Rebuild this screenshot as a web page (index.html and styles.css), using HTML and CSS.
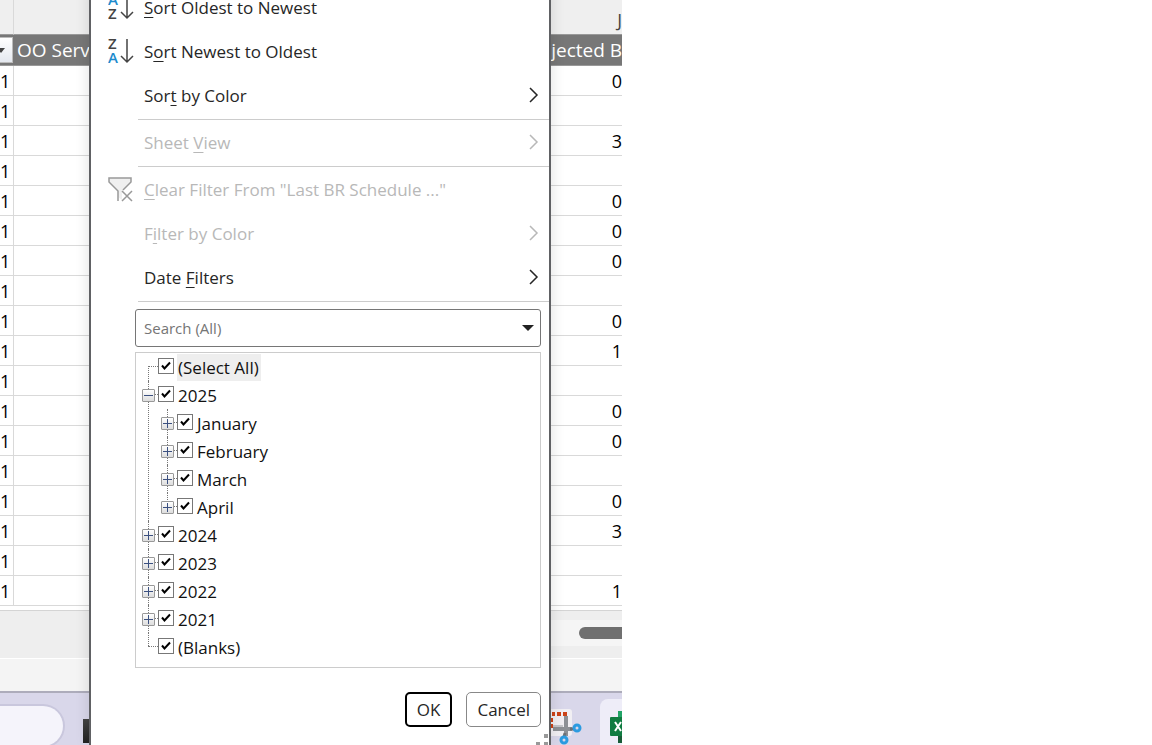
FILE: index.html
```
<!DOCTYPE html>
<html lang="en">
<head>
  <meta charset="UTF-8">
  <meta name="viewport" content="width=device-width, initial-scale=1.0">
  <title>Date filter</title>
  <link rel="stylesheet" href="styles.css">
</head>
<body>
  <div class="screen">
    <!-- worksheet behind the menu -->
    <table class="sheet">
      <colgroup><col class="col-count"><col><col class="col-projected"></colgroup>
      <thead>
        <tr class="letters"><td></td><td></td><th scope="col">J</th></tr>
        <tr class="names">
          <th><button class="filter-btn" aria-label="Filter"><svg width="12" height="25" viewBox="0 0 12 25"><path d="M-3 10h8L1 15z" fill="#444"/></svg></button></th>
          <th scope="col">OO Serv</th>
          <th scope="col">jected B</th>
        </tr>
      </thead>
      <tbody>
        <tr><td>1</td><td></td><td>0</td></tr>
        <tr><td>1</td><td></td><td></td></tr>
        <tr><td>1</td><td></td><td>3</td></tr>
        <tr><td>1</td><td></td><td></td></tr>
        <tr><td>1</td><td></td><td>0</td></tr>
        <tr><td>1</td><td></td><td>0</td></tr>
        <tr><td>1</td><td></td><td>0</td></tr>
        <tr><td>1</td><td></td><td></td></tr>
        <tr><td>1</td><td></td><td>0</td></tr>
        <tr><td>1</td><td></td><td>1</td></tr>
        <tr><td>1</td><td></td><td></td></tr>
        <tr><td>1</td><td></td><td>0</td></tr>
        <tr><td>1</td><td></td><td>0</td></tr>
        <tr><td>1</td><td></td><td></td></tr>
        <tr><td>1</td><td></td><td>0</td></tr>
        <tr><td>1</td><td></td><td>3</td></tr>
        <tr><td>1</td><td></td><td></td></tr>
        <tr><td>1</td><td></td><td>1</td></tr>
      </tbody>
    </table>
    <div class="tabs"><div class="scroll"><div class="thumb"></div></div></div>
    <div class="status"></div>
    <div class="taskbar">
      <div class="pill"></div>
      <div class="dark-app"></div>
      <svg class="snip" width="32" height="38" viewBox="0 0 32 38">
        <rect x="-4" y="1" width="26" height="27" rx="3" fill="#f1eff3"/>
        <path d="M2 4h3v4H2zM7 4h4v4H7zM13 4h4v4h-4zM1 10h2v4H1zM1 16h2v4H1z" fill="#cc4318"/>
        <path d="M3 19h10M16 8v5" stroke="#c4c5c9" stroke-width="4" fill="none"/>
        <path d="M3 21h19M16 8v20" stroke="#8d9095" stroke-width="4" fill="none"/>
        <path d="M20 21h5M15 25l-1 4" stroke="#6d7075" stroke-width="3"/>
        <circle cx="27" cy="20" r="3" fill="#d9d7ea" stroke="#2c9be0" stroke-width="3"/>
        <circle cx="14" cy="32" r="3" fill="#d9d7ea" stroke="#2c9be0" stroke-width="3"/>
      </svg>
      <div class="active-app">
        <svg width="12" height="32" viewBox="0 0 12 32">
          <path d="M8 0h4v32H8z" fill="#21a366"/>
          <path d="M8 16h4v16H8z" fill="#185c37"/>
          <rect y="6" width="20" height="19" rx="1" fill="#107c41"/>
          <path d="M5 11l6 9M11 11l-6 9" stroke="#fff" stroke-width="2"/>
        </svg>
      </div>
    </div>

    <!-- filter menu -->
    <div class="menu">
      <button class="item">
        <svg class="icon" width="26" height="28" viewBox="0 0 26 28">
          <text class="letter blue" x="0" y="12">A</text>
          <text class="letter" x="0" y="26">Z</text>
          <path d="M19 2v23M13 19l6 6 6-6" fill="none" stroke="#444" stroke-width="1.5"/>
        </svg>
        <span><u>S</u>ort Oldest to Newest</span>
      </button>
      <button class="item">
        <svg class="icon" width="26" height="28" viewBox="0 0 26 28">
          <text class="letter" x="0" y="12">Z</text>
          <text class="letter blue" x="0" y="26">A</text>
          <path d="M19 2v23M13 19l6 6 6-6" fill="none" stroke="#444" stroke-width="1.5"/>
        </svg>
        <span>S<u>o</u>rt Newest to Oldest</span>
      </button>
      <button class="item">
        <span>Sor<u>t</u> by Color</span>
        <svg class="arrow" width="10" height="16" viewBox="0 0 10 16"><path d="M1 1l7 7-7 7"/></svg>
      </button>
      <hr>
      <button class="item" disabled>
        <span>Sheet <u>V</u>iew</span>
        <svg class="arrow" width="10" height="16" viewBox="0 0 10 16"><path d="M1 1l7 7-7 7"/></svg>
      </button>
      <hr>
      <button class="item" disabled>
        <svg class="icon" width="26" height="28" viewBox="0 0 26 28">
          <path d="M1 3h22v4l-9 9v9l-4-3v-6L1 7z" fill="#f0f0f0"/>
          <path d="M10 26V16L1 7V3h22v4l-8 8" fill="none" stroke="#999" stroke-width="1.5"/>
          <path d="M14 16l10 10M24 16L14 26" stroke="#999" stroke-width="1.5"/>
        </svg>
        <span><u>C</u>lear Filter From "Last BR Schedule ..."</span>
      </button>
      <button class="item" disabled>
        <span>F<u>i</u>lter by Color</span>
        <svg class="arrow" width="10" height="16" viewBox="0 0 10 16"><path d="M1 1l7 7-7 7"/></svg>
      </button>
      <button class="item">
        <span>Date <u>F</u>ilters</span>
        <svg class="arrow" width="10" height="16" viewBox="0 0 10 16"><path d="M1 1l7 7-7 7"/></svg>
      </button>
      <hr>

      <div class="search">
        <input type="text" placeholder="Search (All)" aria-label="Search">
        <button aria-label="Search options"><svg width="12" height="6" viewBox="0 0 12 6"><path d="M0 0h12L6 6z" fill="#222"/></svg></button>
      </div>

      <ul class="tree">
        <li><div class="row"><input type="checkbox" id="all" checked><label class="selected" for="all">(Select All)</label></div></li>
        <li>
          <div class="row"><button class="toggle open" aria-label="Collapse 2025"></button><input type="checkbox" id="y2025" checked><label for="y2025">2025</label></div>
          <ul>
            <li><div class="row"><button class="toggle" aria-label="Expand January"></button><input type="checkbox" id="jan" checked><label for="jan">January</label></div></li>
            <li><div class="row"><button class="toggle" aria-label="Expand February"></button><input type="checkbox" id="feb" checked><label for="feb">February</label></div></li>
            <li><div class="row"><button class="toggle" aria-label="Expand March"></button><input type="checkbox" id="mar" checked><label for="mar">March</label></div></li>
            <li><div class="row"><button class="toggle" aria-label="Expand April"></button><input type="checkbox" id="apr" checked><label for="apr">April</label></div></li>
          </ul>
        </li>
        <li><div class="row"><button class="toggle" aria-label="Expand 2024"></button><input type="checkbox" id="y2024" checked><label for="y2024">2024</label></div></li>
        <li><div class="row"><button class="toggle" aria-label="Expand 2023"></button><input type="checkbox" id="y2023" checked><label for="y2023">2023</label></div></li>
        <li><div class="row"><button class="toggle" aria-label="Expand 2022"></button><input type="checkbox" id="y2022" checked><label for="y2022">2022</label></div></li>
        <li><div class="row"><button class="toggle" aria-label="Expand 2021"></button><input type="checkbox" id="y2021" checked><label for="y2021">2021</label></div></li>
        <li><div class="row"><input type="checkbox" id="blanks" checked><label for="blanks">(Blanks)</label></div></li>
      </ul>

      <div class="actions">
        <button class="btn ok">OK</button>
        <button class="btn">Cancel</button>
      </div>
      <svg class="grip" width="12" height="12" viewBox="0 0 12 12"><path d="M8 0h4v4H8zM0 8h4v4H0zM8 8h4v4H8z" fill="#999"/></svg>
    </div>
  </div>
</body>
</html>
```

FILE: styles.css
```
* {
  box-sizing: border-box;
}

body {
  margin: 0;
  background: #fff;
  font-family: "Open Sans", "Noto Sans", sans-serif;
  font-size: 17px;
  color: #262626;
}

button, input {
  font: inherit;
  color: inherit;
}

.screen {
  position: relative;
  display: flex;
  flex-direction: column;
  width: 54%;
  height: 100vh;
  overflow: hidden;
}

/* worksheet */
.sheet {
  width: 100%;
  table-layout: fixed;
  border-collapse: separate;
  border-spacing: 0;
  color: #000;
  font-size: 18px;
}

.col-count {
  width: 14px;
}

.col-projected {
  width: 120px;
}

.sheet th, .sheet td {
  height: 30px;
  padding: 0;
  line-height: 28px;
  font-weight: normal;
  text-align: right;
  white-space: nowrap;
  border-bottom: 1px solid #d9d9d9;
}

.sheet tr > :first-child {
  padding-right: 3px;
  border-right: 1px solid #d9d9d9;
}

.sheet .letters > * {
  height: 35px;
  padding-top: 6px;
  background: #efefef;
  border-bottom: 1px solid #999;
  color: #444;
}

.sheet .names > * {
  height: 31px;
  background: #777;
  border-color: #999;
  color: #fff;
  font-size: 19px;
}

.sheet .names > :first-child {
  padding: 0;
  border-right: 0;
}

.sheet .names > :nth-child(2) {
  padding-left: 3px;
  text-align: left;
}

.filter-btn {
  display: block;
  width: 13px;
  height: 26px;
  padding: 0;
  border: 1px solid #bbb;
  border-left: 0;
  background: linear-gradient(#fff, #e4e8ef);
}

.filter-btn svg {
  display: block;
}

.tabs {
  height: 49px;
  margin-top: 4px;
  padding-top: 9px;
  flex: none;
  background: #eee;
  border-top: 1px solid #d4d4d4;
  border-bottom: 1px solid #fff;
}

.scroll {
  height: 26px;
  padding: 7px 0;
  margin-left: auto;
  width: 120px;
  background: #f5f5f5;
}

.thumb {
  width: 43px;
  height: 12px;
  margin-left: auto;
  border-radius: 6px 0 0 6px;
  background: #707070;
}

.status {
  height: 34px;
  flex: none;
  background: #f4f4f4;
  border-bottom: 2px solid #adacbb;
}

.taskbar {
  display: flex;
  flex: 1;
  background: #d9d7ea;
  overflow: hidden;
}

.pill {
  width: 65px;
  height: 44px;
  margin-top: 11px;
  flex: none;
  border: 2px solid #c9c7dd;
  border-left: 0;
  border-radius: 0 22px 22px 0;
  background: #f5f4fb;
}

.dark-app {
  width: 24px;
  height: 24px;
  margin: 26px auto 0 18px;
  background: linear-gradient(#444, #222);
}

.snip {
  margin: 15px 18px 0 0;
}

.active-app {
  width: 22px;
  height: 60px;
  margin-top: 6px;
  padding: 12px 0 0 10px;
  border-radius: 8px 0 0 0;
  background: #eeedf8;
}

/* menu over the sheet */
.menu {
  position: absolute;
  top: -14px;
  bottom: 0;
  left: 89px;
  width: 462px;
  background: #fff;
  border: solid #606164;
  border-width: 0 2px;
  box-shadow: 0 0 14px rgba(0, 0, 0, 0.12);
}

.item {
  display: grid;
  grid-template-columns: 26px 1fr 10px;
  column-gap: 10px;
  align-items: center;
  width: 100%;
  height: 44px;
  padding: 0 10px 2px 17px;
  border: 0;
  background: none;
  text-align: left;
}

.item:disabled {
  color: #b8b8b8;
}

.item span {
  grid-column: 2;
  white-space: nowrap;
}

.item u {
  text-decoration-thickness: 1px;
  text-underline-offset: 3px;
}

.letter {
  font-size: 15px;
  font-weight: 600;
  fill: #444;
}

.letter.blue {
  fill: #1e8bcd;
}

.arrow path {
  fill: none;
  stroke: currentColor;
  stroke-width: 1.5;
}

.menu hr {
  margin: 1px 0 1px 47px;
  border: 0;
  border-top: 1px solid #ccc;
}

.search {
  display: flex;
  align-items: center;
  height: 38px;
  margin: 7px 8px 5px 44px;
  border: 1px solid #767676;
  border-radius: 3px;
}

.search input {
  flex: 1;
  min-width: 0;
  padding: 0 8px;
  border: 0;
  outline: 0;
  background: none;
  font-size: 15px;
}

.search input::placeholder {
  color: #757575;
}

.search button {
  display: flex;
  padding: 6px;
  border: 0;
  background: none;
}

/* date tree */
.tree, .tree ul {
  margin: 0;
  padding: 0;
  list-style: none;
}

.tree {
  margin: 0 8px 0 44px;
  padding: 0 6px 6px;
  border: 1px solid #ccc;
  color: #111;
}

.tree ul {
  padding-left: 19px;
}

.tree li {
  position: relative;
}

/* dotted guide lines */
.tree li::before {
  content: "";
  position: absolute;
  top: 0;
  bottom: 0;
  left: 6px;
  border-left: 1px dotted #777;
}

.tree > li:first-child::before {
  top: 13px;
}

.tree li:last-child::before {
  bottom: auto;
  height: 13px;
}

.row {
  position: relative;
  display: grid;
  grid-template-columns: 13px 16px auto;
  column-gap: 3px;
  justify-content: start;
  align-items: center;
  height: 28px;
}

.row::before {
  content: "";
  position: absolute;
  top: 13px;
  left: 6px;
  width: 10px;
  border-top: 1px dotted #777;
}

.row input {
  grid-column: 2;
  appearance: none;
  width: 16px;
  height: 16px;
  margin: 0 0 2px;
  border: 1px solid #777;
  background: #fff;
}

.row input:checked {
  background: #fff url("data:image/svg+xml,%3Csvg xmlns='http://www.w3.org/2000/svg' viewBox='0 0 14 14'%3E%3Cpath d='M3 6.5l2.5 3 5.5-6' fill='none' stroke='%23000' stroke-width='2'/%3E%3C/svg%3E");
}

.row label {
  padding: 0 2px 0 1px;
  line-height: 27px;
}

.row .selected {
  background: #eee;
}

.toggle {
  position: relative;
  width: 13px;
  height: 13px;
  padding: 0;
  border: 1px solid #999;
  border-radius: 1px;
  background:
    linear-gradient(#3b5080, #3b5080) center / 9px 1px no-repeat,
    linear-gradient(#3b5080, #3b5080) center / 1px 9px no-repeat,
    linear-gradient(#fff, #ddd);
}

.toggle.open {
  background:
    linear-gradient(#3b5080, #3b5080) center / 9px 1px no-repeat,
    linear-gradient(#fff, #ddd);
}

.actions {
  display: flex;
  justify-content: flex-end;
  gap: 14px;
  padding: 24px 8px 0;
}

.btn {
  height: 35px;
  padding: 0 10px;
  border: 1px solid #888;
  border-radius: 5px;
  background: #fff;
}

.btn.ok {
  border: 2px solid #000;
}

.grip {
  position: absolute;
  right: 1px;
  bottom: -1px;
}
```
